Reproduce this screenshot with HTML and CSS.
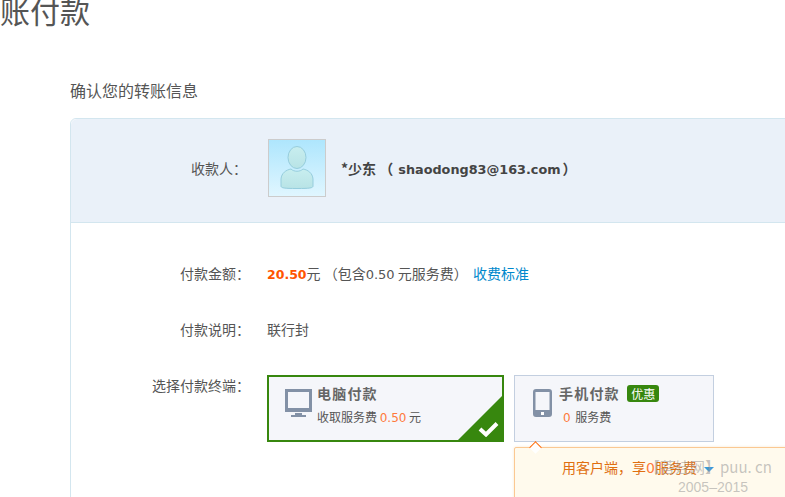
FILE: index.html
```html
<!DOCTYPE html>
<html lang="zh-CN">
<head>
    <meta charset="UTF-8">
    <meta name="viewport" content="width=device-width, initial-scale=1.0">
    <title>转账付款</title>
    <link rel="stylesheet" href="styles.css">
</head>
<body>
    <h1 class="page-title">账付款</h1>
    <div class="content">
        <h2 class="section-title">确认您的转账信息</h2>
        <div class="panel">
            <div class="payee">
                <div class="row-label">收款人：</div>
                <div class="avatar">
                    <svg width="56" height="56" viewBox="0 0 56 56">
                        <defs>
                            <linearGradient id="avatarBody" x1="0" y1="0" x2="0" y2="1">
                                <stop offset="0" stop-color="#c8eeef"/>
                                <stop offset="1" stop-color="#b8e3e6"/>
                            </linearGradient>
                        </defs>
                        <ellipse cx="28" cy="17.5" rx="9" ry="11" fill="url(#avatarBody)" stroke="#96cddd" stroke-width="1"/>
                        <path d="M22 29 C17 30 12.5 33 12 39 L12 46 C12 48 15 48.500 28 48.500 C41 48.500 44 48 44 46 L44 39 C43.500 33 39 30 34 29 C31 32 25 32 22 29 Z" fill="url(#avatarBody)" stroke="#96cddd" stroke-width="1"/>
                    </svg>
                </div>
                <div class="payee-name">*少东 （<span class="payee-mail">shaodong83@163.com</span>）</div>
            </div>
            <div class="details">
                <div class="row row-amount">
                    <div class="row-label">付款金额：</div>
                    <div class="row-value"><span class="amount">20.50</span>元 （包含<span class="num">0.50</span> 元服务费） <a class="link" href="#">收费标准</a></div>
                </div>
                <div class="row row-note">
                    <div class="row-label">付款说明：</div>
                    <div class="row-value">联行封</div>
                </div>
                <div class="row row-terminal">
                    <div class="row-label">选择付款终端：</div>
                    <div class="terminals">
                        <div class="terminal terminal-active">
                            <svg class="terminal-icon" width="27" height="28" viewBox="0 0 27 28">
                                <path d="M0 0H27V23H0Z M3 3V19H24V3Z" fill="#8391a6" fill-rule="evenodd"/>
                                <path d="M10 24H17V26H21V28H6V26H10Z" fill="#8391a6"/>
                            </svg>
                            <div>
                                <div class="terminal-name">电脑付款</div>
                                <div class="terminal-fee">收取服务费 <span class="fee">0.50</span> 元</div>
                            </div>
                            <span class="corner"></span>
                            <svg class="check" width="21" height="16" viewBox="0 0 21 16">
                                <path d="M2 8L8 13.500L19 2.500" fill="none" stroke="#fff" stroke-width="4"/>
                            </svg>
                        </div>
                        <div class="terminal">
                            <svg class="terminal-icon phone-icon" width="19" height="28" viewBox="0 0 19 28">
                                <path d="M3 0H16Q19 0 19 3V25Q19 28 16 28H3Q0 28 0 25V3Q0 0 3 0Z M2.500 3V21H16.500V3Z" fill="#8391a6" fill-rule="evenodd"/>
                                <rect x="8" y="23" width="3" height="3" fill="#fff"/>
                            </svg>
                            <div>
                                <div class="terminal-name">手机付款 <span class="badge">优惠</span></div>
                                <div class="terminal-fee phone-fee"><span class="fee">0</span> <span class="fee-label">服务费</span></div>
                            </div>
                        </div>
                    </div>
                </div>
                <div class="tip">
                    <span class="tip-arrow"></span>
                    <div class="tip-text">用客户端，享<span class="fee">0</span>服务费<span class="tip-caret"></span></div>
                </div>
            </div>
        </div>
    </div>
    <div class="watermark">【菩娃网】puu. cn<div class="watermark-years">2005–2015</div></div>
</body>
</html>
```

FILE: styles.css
```css
* {
    margin: 0;
    padding: 0;
    box-sizing: border-box;
}

html, body {
    height: 100%;
    overflow: hidden;
    background-color: #fff;
    font-family: "Noto Sans CJK SC", "Liberation Sans", sans-serif;
    font-size: 14px;
    color: #555;
}

.page-title {
    margin-top: -10px;
    height: 40px;
    font-size: 30px;
    line-height: 40px;
    font-weight: normal;
    color: #555;
}

.content {
    width: 900px;
    padding-left: 70px;
}

.section-title {
    margin-top: 50px;
    height: 38px;
    font-size: 16px;
    line-height: 20px;
    font-weight: normal;
    color: #555;
}

.panel {
    border: 1px solid #d3e6ef;
    border-radius: 6px 0 0 0;
    height: 500px;
}

.payee {
    display: flex;
    align-items: center;
    height: 104px;
    padding-bottom: 5px;
    background-color: #eaf1f9;
    border-bottom: 1px solid #d3e6ef;
    border-radius: 6px 0 0 0;
}

.row-label {
    width: 176px;
    text-align: right;
    line-height: 20px;
}

.avatar {
    width: 58px;
    height: 58px;
    margin-left: 21px;
    border: 1px solid #ccc;
    background: linear-gradient(#aee6fd, #e0f6ff);
}

.avatar svg {
    display: block;
}

.payee-name {
    margin-left: 15px;
    font-size: 14px;
    font-weight: bold;
    color: #444;
}

.payee-mail {
    margin: 0 2px 0 5px;
    font-family: "DejaVu Sans", sans-serif;
    font-size: 12.8px;
}

.row {
    display: flex;
}

.row .row-label {
    width: 179px;
    margin-right: 17px;
}

.row-value {
    line-height: 20px;
}

.row-amount {
    padding-top: 40px;
}

.row-note {
    padding-top: 34px;
}

.row-terminal {
    padding-top: 36px;
}

.amount {
    font-family: "DejaVu Sans", sans-serif;
    font-size: 12.5px;
    font-weight: bold;
    color: #f50;
}

.num {
    font-family: "DejaVu Sans", sans-serif;
    font-size: 13px;
}

.link {
    margin-left: 2px;
    color: #0088cc;
    text-decoration: none;
}

.terminals {
    display: flex;
    gap: 10px;
}

.terminal {
    position: relative;
    display: flex;
    width: 200px;
    height: 67px;
    padding: 7px 0 0 18px;
    background-color: #f5f6fa;
    border: 1px solid #c3cfe0;
    overflow: hidden;
}

.terminal-active {
    width: 237px;
    border: 2px solid #37870e;
    padding: 6px 0 0 16px;
}

.terminal-icon {
    margin: 6px 5px 0 0;
    flex-shrink: 0;
}

.phone-icon {
    margin: 6px 7px 0 0;
}

.terminal-name {
    font-size: 14px;
    line-height: 20px;
    font-weight: bold;
    letter-spacing: 1.2px;
    color: #666;
}

.terminal-fee {
    margin-top: 5px;
    font-size: 12px;
    line-height: 18px;
    color: #555;
}

.phone-fee {
    margin-left: 4px;
}

.fee-label {
    margin-left: 2px;
}

.fee {
    font-family: "DejaVu Sans", sans-serif;
    color: #ff7a3c;
}

.badge {
    display: inline-block;
    margin-left: 3px;
    padding: 0 4px;
    background-color: #37870e;
    border-radius: 3px;
    font-size: 12px;
    line-height: 17px;
    font-weight: normal;
    letter-spacing: 0;
    color: #fff;
}

.corner {
    position: absolute;
    right: 0;
    bottom: 0;
    border-style: solid;
    border-width: 0 0 44px 44px;
    border-color: transparent transparent #37870e transparent;
}

.check {
    position: absolute;
    right: 3px;
    bottom: 3px;
}

.tip {
    position: relative;
    width: 300px;
    height: 60px;
    margin: 5px 0 0 443px;
    padding: 9px 0 0 47px;
    background-color: #fffaed;
    border: 1px solid #fbc892;
    border-radius: 2px;
    box-shadow: 0 0 3px #f7e7d0;
}

.tip-arrow {
    position: absolute;
    top: -5px;
    left: 16px;
    width: 9px;
    height: 9px;
    background-color: #fff;
    border-top: 1px solid #f60;
    border-left: 1px solid #f60;
    transform: rotate(45deg);
}

.tip-text {
    line-height: 20px;
    color: #e06f10;
}

.tip-caret {
    display: inline-block;
    margin-left: 7px;
    border-style: solid;
    border-width: 5px 5px 0 5px;
    border-color: #3b9ad9 transparent transparent transparent;
    vertical-align: middle;
}

/* site watermark laid over the bottom right corner */
.watermark {
    position: absolute;
    top: 456px;
    left: 645px;
    font-size: 15px;
    line-height: 21px;
    color: rgba(150, 150, 150, 0.55);
}

.watermark-years {
    margin-left: 33px;
    font-family: "Liberation Sans", sans-serif;
    font-size: 14px;
    line-height: 20px;
}
```
